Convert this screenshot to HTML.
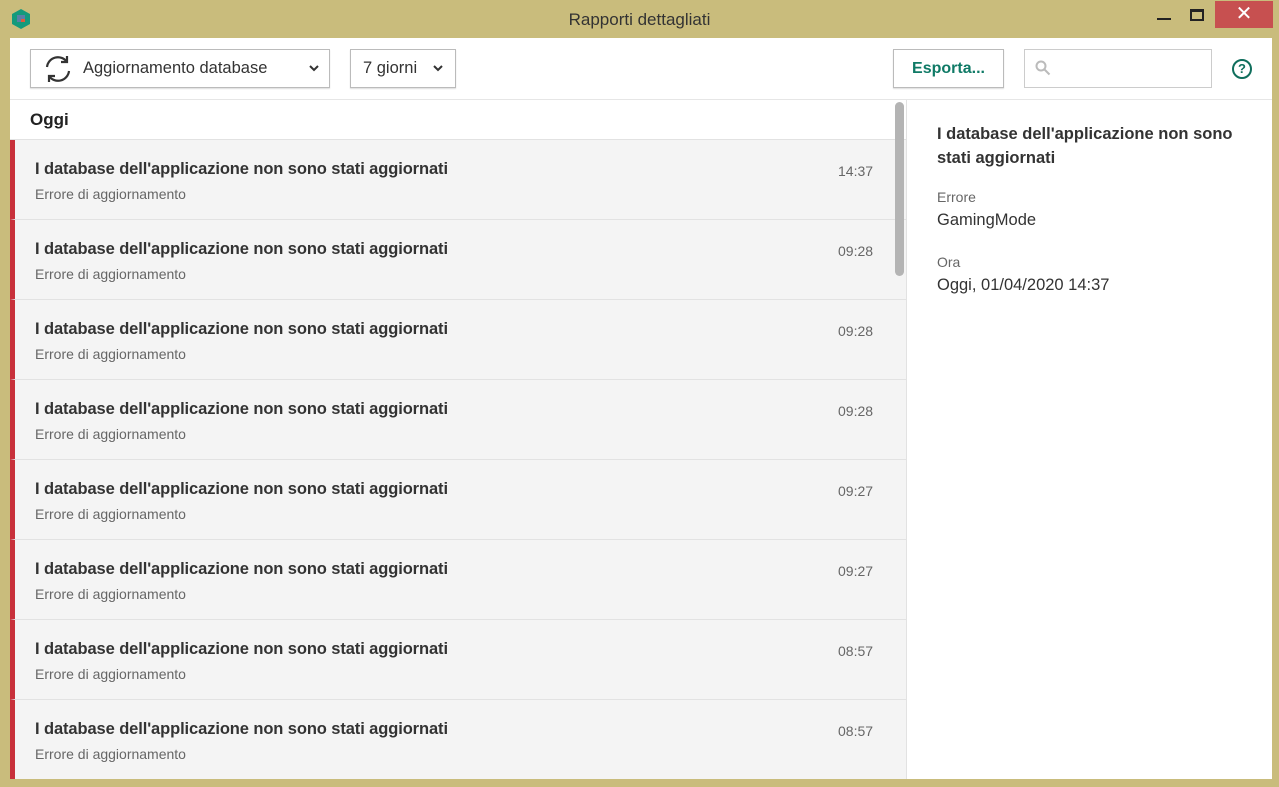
<!DOCTYPE html><html><head><meta charset="utf-8"><style>
*{margin:0;padding:0;box-sizing:border-box}
html,body{width:1279px;height:787px;overflow:hidden}
body{background:#c9bc7c;font-family:"Liberation Sans",sans-serif;position:relative;color:#333}
.title{position:absolute;top:10px;left:0;width:1279px;text-align:center;font-size:17px;color:#333}
.win{position:absolute;left:10px;top:38px;width:1262px;height:741px;background:#fff;overflow:hidden}
.tb{position:absolute;left:0;top:0;width:1262px;height:62px;border-bottom:1px solid #e6e6e6}
.dd{position:absolute;top:11px;height:39px;border:1px solid #bbb;background:#fff;font-size:17px;line-height:37px;box-shadow:0 1px 1px #ddd}
.list{position:absolute;left:0;top:62px;width:896px;height:679px;overflow:hidden}
.row{position:relative;height:80px;background:#f4f4f4;border-bottom:1px solid #e2e2e2;border-left:5px solid #c8303a}
.row b{position:absolute;left:20px;top:20px;font-size:16.5px;color:#333;letter-spacing:-0.1px}
.row i{position:absolute;left:20px;top:46px;font-size:14px;font-style:normal;color:#666}
.row span{position:absolute;left:823px;top:23px;font-size:14px;color:#666}
.rp{position:absolute;left:896px;top:62px;width:366px;height:679px;border-left:1px solid #e2e2e2}
</style></head><body>
<svg style="position:absolute;left:12px;top:9px" width="18" height="20"><polygon points="9,0 18,5 18,15 9,20 0,15 0,5" fill="#149a7c"/><rect x="5" y="6" width="8" height="7" fill="#5a7fa8"/><rect x="9" y="10" width="4" height="3" fill="#e05a3a"/></svg>
<div class="title">Rapporti dettagliati</div>
<div style="position:absolute;left:1157px;top:18px;width:14px;height:2px;background:#222"></div>
<div style="position:absolute;left:1190px;top:9px;width:14px;height:12px;border:2px solid #222;border-top-width:3px"></div>
<div style="position:absolute;left:1215px;top:1px;width:58px;height:27px;background:#c75050;color:#fff;text-align:center;font-size:20px;line-height:27px">✕</div>
<div class="win">
<div class="tb">
<div class="dd" style="left:20px;width:300px"><svg style="position:absolute;left:12px;top:4px" width="30" height="30" viewBox="0 0 30 30" fill="none" stroke="#333" stroke-width="2.2"><path d="M4 13A11 11 0 0 1 24 8"/><path d="M24 2v6h-6"/><path d="M26 17A11 11 0 0 1 6 22"/><path d="M6 28v-6h6"/></svg><span style="position:absolute;left:52px;font-size:16.5px">Aggiornamento database</span><svg style="position:absolute;right:10px;top:15px" width="10" height="7" fill="none" stroke="#333" stroke-width="2"><path d="M1 1l4 4 4-4"/></svg></div>
<div class="dd" style="left:340px;width:106px"><span style="position:absolute;left:12px;font-size:16.5px">7 giorni</span><svg style="position:absolute;right:12px;top:15px" width="10" height="7" fill="none" stroke="#333" stroke-width="2"><path d="M1 1l4 4 4-4"/></svg></div>
<div class="dd" style="left:883px;width:111px;text-align:center;color:#0f7a66;font-weight:bold;font-size:16px">Esporta...</div>
<div style="position:absolute;left:1014px;top:11px;width:188px;height:39px;border:1px solid #ccc"><svg style="position:absolute;left:10px;top:10px" width="16" height="16" fill="none" stroke="#bbb" stroke-width="2"><circle cx="6" cy="6" r="4.5"/><path d="M9.5 9.5l5 5"/></svg></div>
<div style="position:absolute;left:1222px;top:21px;width:20px;height:20px;border:2.5px solid #0f6e5c;border-radius:50%;color:#0f6e5c;font-weight:bold;font-size:13px;text-align:center;line-height:15px">?</div>
</div>
<div class="list">
<div style="height:40px;border-bottom:1px solid #e2e2e2;font-size:17px;font-weight:bold;padding:10px 20px;color:#222">Oggi</div>
<div class="row"><b>I database dell'applicazione non sono stati aggiornati</b><i>Errore di aggiornamento</i><span>14:37</span></div>
<div class="row"><b>I database dell'applicazione non sono stati aggiornati</b><i>Errore di aggiornamento</i><span>09:28</span></div>
<div class="row"><b>I database dell'applicazione non sono stati aggiornati</b><i>Errore di aggiornamento</i><span>09:28</span></div>
<div class="row"><b>I database dell'applicazione non sono stati aggiornati</b><i>Errore di aggiornamento</i><span>09:28</span></div>
<div class="row"><b>I database dell'applicazione non sono stati aggiornati</b><i>Errore di aggiornamento</i><span>09:27</span></div>
<div class="row"><b>I database dell'applicazione non sono stati aggiornati</b><i>Errore di aggiornamento</i><span>09:27</span></div>
<div class="row"><b>I database dell'applicazione non sono stati aggiornati</b><i>Errore di aggiornamento</i><span>08:57</span></div>
<div class="row"><b>I database dell'applicazione non sono stati aggiornati</b><i>Errore di aggiornamento</i><span>08:57</span></div>
<div style="position:absolute;left:885px;top:2px;width:9px;height:174px;background:#b4b4b4;border-radius:5px"></div>
</div>
<div class="rp">
<div style="position:absolute;left:30px;top:22px;width:320px;font-size:16.5px;font-weight:bold;line-height:24px;color:#333">I database dell'applicazione non sono stati aggiornati</div>
<div style="position:absolute;left:30px;top:89px;font-size:14px;color:#666">Errore</div>
<div style="position:absolute;left:30px;top:111px;font-size:16.5px">GamingMode</div>
<div style="position:absolute;left:30px;top:154px;font-size:14px;color:#666">Ora</div>
<div style="position:absolute;left:30px;top:176px;font-size:16.5px">Oggi, 01/04/2020 14:37</div>
</div>
</div>
</body></html>
